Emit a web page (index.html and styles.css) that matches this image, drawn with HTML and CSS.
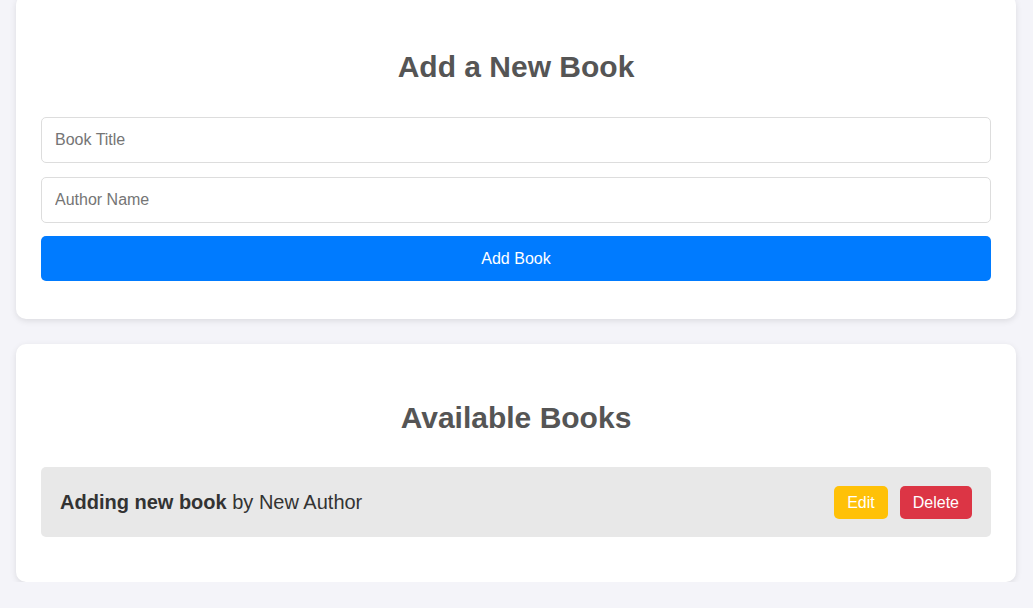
FILE: index.html
```html
<!DOCTYPE html>
<html lang="en">
<head>
<meta charset="utf-8">
<title>Book Library</title>
<link rel="stylesheet" href="styles.css">
</head>
<body>
<main class="page">
  <section class="card card-form">
    <h2 class="card-title">Add a New Book</h2>
    <form class="book-form">
      <input class="field" type="text" placeholder="Book Title">
      <input class="field" type="text" placeholder="Author Name">
      <button class="btn-add" type="button">Add Book</button>
    </form>
  </section>
  <section class="card card-list">
    <h2 class="card-title card-title-list">Available Books</h2>
    <ul class="book-list">
      <li class="book-item">
        <span class="book-text"><strong>Adding new book</strong> by New Author</span>
        <span class="book-actions">
          <button class="btn-small btn-edit" type="button">Edit</button>
          <button class="btn-small btn-delete" type="button">Delete</button>
        </span>
      </li>
    </ul>
  </section>
</main>
</body>
</html>
```
FILE: styles.css
```css
* { box-sizing: border-box; }
html, body { margin: 0; padding: 0; }
body {
  background: #f4f4f9;
  font-family: "Liberation Sans", Arial, sans-serif;
  color: #333;
}
.page {
  display: flex;
  flex-direction: column;
  gap: 25px;
  padding: 0 17px 0 16px;
  margin-top: -5px;
}
.card {
  background: #fff;
  border-radius: 10px;
  box-shadow: 0 2px 6px rgba(0, 0, 0, 0.1);
  padding: 25px;
}
.card-title {
  font-size: 30px;
  line-height: 34px;
  font-weight: bold;
  color: #555;
  text-align: center;
  margin: 30px 0 33px;
}
.card-title-list { margin: 32px 0 32px; }
.book-form {
  display: flex;
  flex-direction: column;
  margin: 0 0 13px;
}
.field {
  width: 100%;
  height: 46px;
  font-family: inherit;
  font-size: 16px;
  padding: 0 13px;
  border: 1px solid #ddd;
  border-radius: 5px;
  margin-bottom: 14px;
  color: #333;
}
.field::placeholder { color: #757575; }
.field + .field { margin-bottom: 13px; }
.btn-add {
  width: 100%;
  height: 45px;
  border: none;
  border-radius: 5px;
  background: #007bff;
  color: #fff;
  font-family: inherit;
  font-size: 16px;
}
.book-list {
  list-style: none;
  margin: 0 0 20px;
  padding: 0;
}
.book-item {
  display: flex;
  align-items: center;
  justify-content: space-between;
  height: 70px;
  padding: 1px 19px 0;
  background: #e8e8e8;
  border-radius: 5px;
  font-size: 20px;
  color: #333;
}
.book-actions { display: flex; gap: 12px; }
.btn-small {
  border: none;
  border-radius: 5px;
  color: #fff;
  font-family: inherit;
  font-size: 16px;
  line-height: 19px;
  padding: 7px 13px;
}
.btn-edit { background: #ffc107; }
.btn-delete { background: #dc3545; }
```
